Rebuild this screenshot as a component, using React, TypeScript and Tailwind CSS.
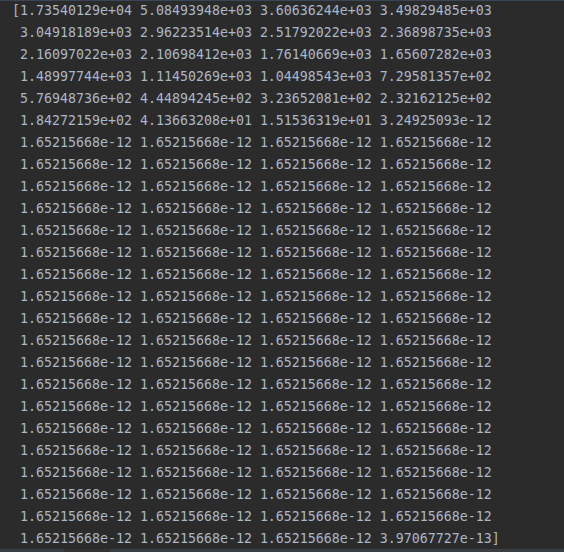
const head: string[][] = [
  ['1.73540129e+04', '5.08493948e+03', '3.60636244e+03', '3.49829485e+03'],
  ['3.04918189e+03', '2.96223514e+03', '2.51792022e+03', '2.36898735e+03'],
  ['2.16097022e+03', '2.10698412e+03', '1.76140669e+03', '1.65607282e+03'],
  ['1.48997744e+03', '1.11450269e+03', '1.04498543e+03', '7.29581357e+02'],
  ['5.76948736e+02', '4.44894245e+02', '3.23652081e+02', '2.32162125e+02'],
  ['1.84272159e+02', '4.13663208e+01', '1.51536319e+01', '3.24925093e-12'],
];

const tiny = '1.65215668e-12';
const rows: string[][] = [
  ...head,
  ...Array.from({ length: 18 }, () => [tiny, tiny, tiny, tiny]),
  [tiny, tiny, tiny, '3.97067727e-13'],
];

export default function App() {
  return (
    <div className="w-[564px] h-[552px] bg-[#2b2b2b] flex flex-col overflow-hidden border-t border-[#3a4656]">
      <pre
        className="flex-1 min-h-0 pl-[12px] -mt-px text-[13.29px] leading-[22px] text-[#a9b7c6]"
        style={{ fontFamily: '"DejaVu Sans Mono", "Liberation Mono", monospace' }}
      >
        {rows.map((r, i) => (
          <div key={i}>
            {(i === 0 ? '[' : ' ') + r.join(' ') + (i === rows.length - 1 ? ']' : '')}
          </div>
        ))}
      </pre>
      {/* horizontal scrollbar strip */}
      <div className="h-[3px] shrink-0 flex bg-[#3c3f41]">
        <div className="w-[64px]" />
        <div className="w-[46px] bg-[#313335]" />
      </div>
    </div>
  );
}
